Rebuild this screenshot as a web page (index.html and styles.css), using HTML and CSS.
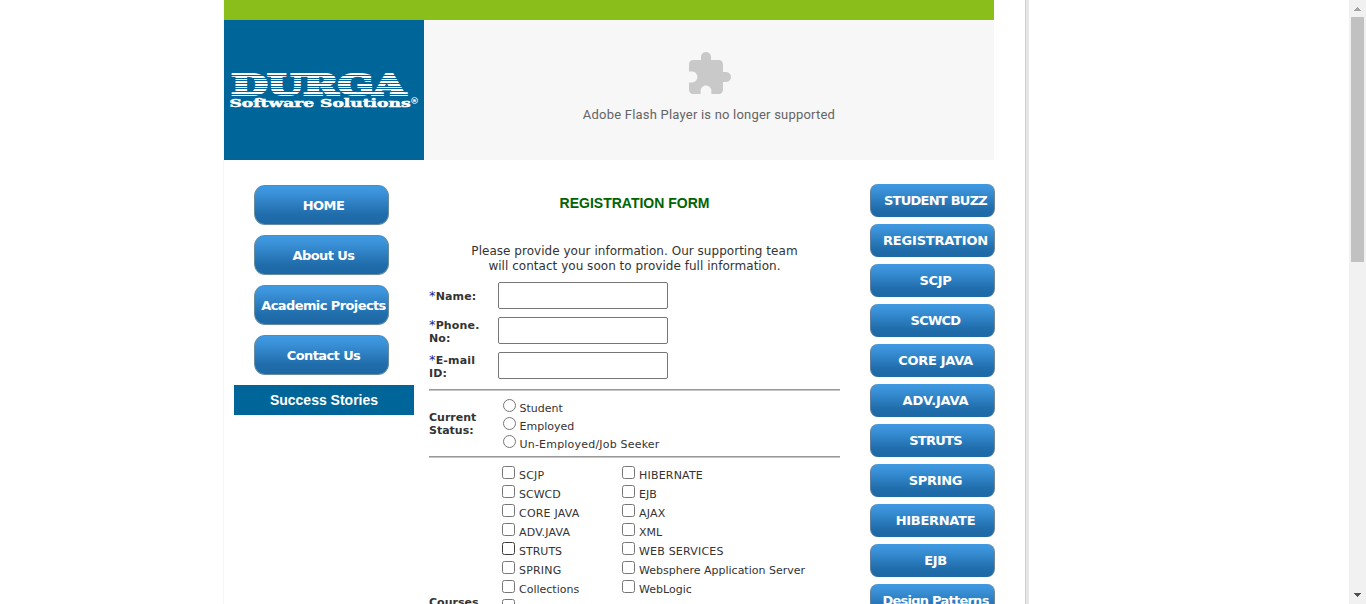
FILE: index.html
```html
<!DOCTYPE html>
<html lang="en">
<head>
<meta charset="utf-8">
<title>Durga Software Solutions - Registration</title>
<link rel="stylesheet" href="styles.css">
</head>
<body>
<div class="page">
  <div class="topbar"></div>
  <header class="header">
    <div class="logo">
      <svg width="200" height="140" viewBox="0 0 200 140">
        <defs><pattern id="stripes" width="200" height="8" y="53" patternUnits="userSpaceOnUse"><path fill="#fff" d="M0 0h200v2H0zM0 3h200v2H0zM0 6h200v1H0z"/></pattern></defs>
        <text class="brand" x="7.500" y="75" textLength="174" lengthAdjust="spacingAndGlyphs" fill="url(#stripes)" stroke="url(#stripes)">DURGA</text>
        <text class="tagline" x="5.500" y="87" textLength="181" lengthAdjust="spacingAndGlyphs">Software Solutions</text>
        <text class="mark" x="186" y="83.500">®</text>
      </svg>
    </div>
    <div class="flash">
      <svg width="48" height="48" viewBox="0 0 24 24"><path fill="#c9c9c9" d="M20.500 11H19V7c0-1.100-.9-2-2-2h-4V3.500C13 2.120 11.880 1 10.500 1S8 2.120 8 3.500V5H4c-1.100 0-1.990.9-1.990 2v3.800H3.500c1.490 0 2.700 1.210 2.700 2.700s-1.210 2.700-2.700 2.700H2V20c0 1.100.9 2 2 2h3.800v-1.500c0-1.490 1.210-2.700 2.700-2.700s2.700 1.210 2.700 2.700V22H17c1.100 0 2-.9 2-2v-4h1.500c1.380 0 2.500-1.120 2.500-2.500S21.880 11 20.500 11z"/></svg>
      <span>Adobe Flash Player is no longer supported</span>
    </div>
  </header>
  <div class="columns">
    <nav class="menu">
      <a>HOME</a><a>About Us</a><a>Academic Projects</a><a>Contact Us</a>
      <div class="stories">Success Stories</div>
    </nav>
    <main class="form">
      <h1>REGISTRATION FORM</h1>
      <p class="intro">Please provide your information. Our supporting team<br>will contact you soon to provide full information.</p>
      <div class="row"><label><i>*</i>Name:</label><input type="text"></div>
      <div class="row"><label><i>*</i>Phone.<br>No:</label><input type="text"></div>
      <div class="row"><label><i>*</i>E-mail<br>ID:</label><input type="text"></div>
      <hr>
      <div class="status">
        <label class="caption">Current<br>Status:</label>
        <div class="radios">
          <label><input type="radio" name="s"><span>Student</span></label>
          <label><input type="radio" name="s"><span>Employed</span></label>
          <label><input type="radio" name="s"><span class="seeker">Un-Employed/Job Seeker</span></label>
        </div>
      </div>
      <hr>
      <div class="courses">
        <label class="caption">Courses</label>
        <div class="checks">
          <label><input type="checkbox"><span class="caps">SCJP</span></label><label><input type="checkbox"><span class="caps">HIBERNATE</span></label>
          <label><input type="checkbox"><span>SCWCD</span></label><label><input type="checkbox"><span>EJB</span></label>
          <label><input type="checkbox"><span class="caps">CORE JAVA</span></label><label><input type="checkbox"><span class="caps">AJAX</span></label>
          <label><input type="checkbox"><span class="caps">ADV.JAVA</span></label><label><input type="checkbox"><span>XML</span></label>
          <label><input type="checkbox" class="hot"><span>STRUTS</span></label><label><input type="checkbox"><span class="caps">WEB SERVICES</span></label>
          <label><input type="checkbox"><span class="caps">SPRING</span></label><label><input type="checkbox"><span>Websphere Application Server</span></label>
          <label><input type="checkbox"><span>Collections</span></label><label><input type="checkbox"><span>WebLogic</span></label>
          <label><input type="checkbox"></label>
        </div>
      </div>
    </main>
    <nav class="topics">
      <a class="tight">STUDENT BUZZ</a><a class="wide">REGISTRATION</a><a>SCJP</a><a class="tight">SCWCD</a><a>CORE JAVA</a><a class="wide">ADV.JAVA</a><a class="tight">STRUTS</a><a>SPRING</a><a>HIBERNATE</a><a>EJB</a><a class="tight">Design Patterns</a>
    </nav>
  </div>
</div>
<div class="scrollbar">
  <svg width="17" height="17"><path fill="#a3a3a3" d="M5 11h7v-1h-1V9h-1V8H9V7H8v1H7v1H6v1H5z"/></svg>
  <div class="thumb"></div>
  <svg width="17" height="17"><path fill="#505050" d="M5 6h7v1h-1v1h-1v1H9v1H8V9H7V8H6V7H5z"/></svg>
</div>
</body>
</html>
```
FILE: styles.css
```css
* { box-sizing: border-box; }
body {
  margin: 0;
  height: 604px;
  overflow: hidden;
  display: flex;
  justify-content: space-between;
  background: #fff;
  color: #333;
  font: 11px/13px "DejaVu Sans", sans-serif;
}
.page {
  width: 806px;
  height: 604px;
  overflow: hidden;
  margin-left: 223px;
  border-left: 1px solid #f6f6f6;
  border-right: 3px solid #e6e6e6;
  background: linear-gradient(#d0d0d0, #d0d0d0) right / 1px 100% no-repeat;
}
.topbar { width: 770px; height: 20px; background: #8abf1b; }
.header { display: flex; width: 770px; height: 140px; }
.logo { width: 200px; background: #006699; }
.logo svg { display: block; }
.brand { font: bold 27px "DejaVu Serif", serif; stroke-width: 2.4px; }
.tagline { font: bold 11.5px "DejaVu Serif", serif; fill: #fff; stroke: #fff; stroke-width: .5px; }
.mark { font: bold 9px "DejaVu Sans", sans-serif; fill: #fff; }
.flash {
  flex: 1;
  display: flex;
  flex-direction: column;
  align-items: center;
  padding-top: 30px;
  background: #f7f7f7;
  color: #646464;
  font: 13px/16px Roboto, sans-serif;
}
.flash span { margin-top: 9px; letter-spacing: .21px; }
.columns { display: flex; width: 771px; }
.menu { width: 200px; padding: 25px 10px 0; }
.menu a, .topics a {
  display: flex;
  align-items: center;
  justify-content: center;
  color: #fff;
  font-weight: bold;
  font-size: 13px;
  letter-spacing: -.3px;
  white-space: nowrap;
  background: linear-gradient(#3f9ae2, #3b92d9 18%, #206dab 75%, #1d68a5);
}
.menu a {
  width: 135px;
  height: 40px;
  margin: 0 0 10px 20px;
  padding: 1px 0 0 4px;
  border: 1px solid #668c9d;
  border-top-color: #438fcb;
  border-radius: 11px;
  letter-spacing: -.6px;
}
.stories {
  height: 30px;
  background: #006699;
  color: #fff;
  text-align: center;
  font: bold 14px/30px "Liberation Sans", sans-serif;
}
.form { width: 446px; padding: 35px 30px 0 5px; }
h1 {
  margin: 0;
  text-align: center;
  color: #006400;
  font: bold 14px/16px "Liberation Sans", sans-serif;
}
.intro { margin: 33px 0 8px; text-align: center; font-size: 12px; line-height: 15px; letter-spacing: .03px; }
.row { display: flex; align-items: center; height: 27px; margin-bottom: 8px; }
.row label, .caption { width: 69px; flex: none; font-weight: bold; }
.row label { padding-top: 2px; letter-spacing: .15px; }
.row i { color: #229; font-size: 13px; line-height: 11px; font-style: normal; font-weight: normal; }
.row input {
  width: 170px;
  height: 27px;
  border: 1px solid #767676;
  border-radius: 2px;
  background: #fff;
}
hr { height: 2px; margin: 0; border: 0; background: linear-gradient(#999 50%, #c5c5c5 50%); }
.row + hr { margin-top: 10px; }
.status { display: flex; align-items: center; height: 65px; }
.radios { padding: 4px 0 0 5px; }
.radios label, .checks label { display: flex; }
.radios label { height: 18px; }
.radios input, .checks input { width: 13px; height: 13px; margin: 0; flex: none; }
.radios span { margin: 3px 0 0 3.500px; }
.seeker { letter-spacing: .2px; }
.courses { display: flex; height: 280px; }
.courses .caption { padding-top: 138px; }
.checks { display: grid; grid-template-columns: 120px 220px; grid-auto-rows: 19px; align-content: start; padding: 8px 0 0 4px; }
.checks span { margin: 3px 0 0 4px; white-space: nowrap; }
.checks .caps { letter-spacing: .2px; }
.checks .hot { appearance: none; border: 1px solid #3c3c3c; border-radius: 2.500px; }
.topics { width: 125px; padding-top: 24px; }
.topics a {
  height: 33px;
  margin-bottom: 7px;
  padding-left: 6px;
  border-left: 1px solid #607f9e;
  border-right: 1px solid #718796;
  border-radius: 8px;
}
.topics .tight { letter-spacing: -.75px; }
.topics .wide { letter-spacing: -.2px; }
.scrollbar { display: flex; flex-direction: column; width: 17px; height: 604px; background: #f1f1f1; }
.scrollbar svg { display: block; flex: none; }
.scrollbar svg:last-child { margin-top: auto; }
.thumb { width: 13px; height: 245px; margin: 0 2px; background: #c1c1c1; }
```
